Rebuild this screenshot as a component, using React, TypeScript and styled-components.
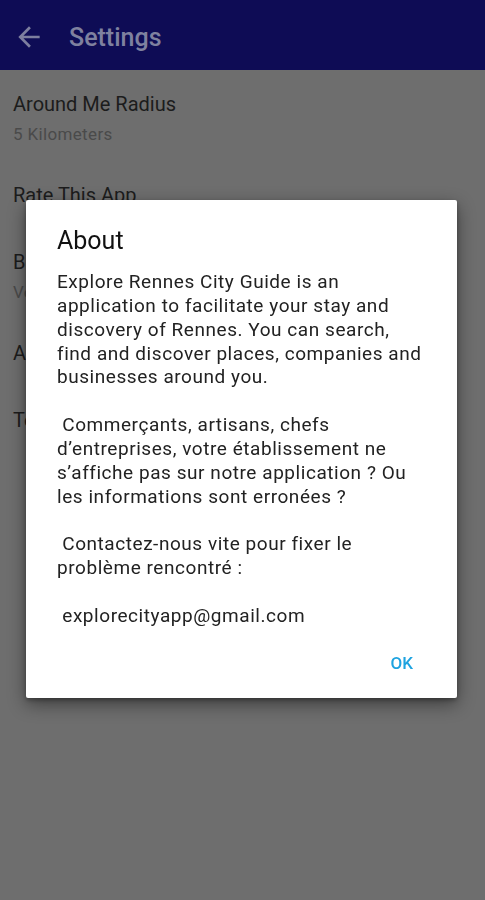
import React from "react";
import styled, { createGlobalStyle } from "styled-components";

const Global = createGlobalStyle`
  html, body { margin: 0; padding: 0; }
  body {
    background: #6e6e6e;
    font-family: Roboto, "Noto Sans", "Liberation Sans", sans-serif;
    -webkit-font-smoothing: antialiased;
  }
`;

const Page = styled.div`
  width: 485px;
  height: 900px;
  background: #6e6e6e;
  overflow: hidden;
  display: flex;
  flex-direction: column;
`;

const AppBar = styled.header`
  height: 70px;
  flex: 0 0 70px;
  background: #0e0c55;
  display: flex;
  align-items: center;
  padding: 4px 0 0 13px;
  gap: 24px;
  box-sizing: border-box;
`;

const BackIcon = styled.svg`
  width: 32px;
  height: 32px;
  fill: #7d7f9f;
  flex: 0 0 auto;
`;

const Title = styled.h1`
  margin: 0;
  font-size: 25px;
  font-weight: 500;
  color: #7f819f;
`;

const List = styled.div`
  display: flex;
  flex-direction: column;
`;

const Row = styled.div<{ $hasSub?: boolean }>`
  display: flex;
  flex-direction: column;
  padding: 22px 13px ${(p) => (p.$hasSub ? "16px" : "21px")};
`;

const RowTitle = styled.div`
  font-size: 20px;
  line-height: 24px;
  color: #1c1c1c;
`;

const RowSub = styled.div`
  margin-top: 7px;
  font-size: 17px;
  line-height: 22px;
  letter-spacing: 0.35px;
  color: #4a4a4a;
`;

const Scrim = styled.div`
  position: fixed;
  inset: 0;
  display: flex;
  justify-content: flex-start;
  align-items: flex-start;
  padding: 200px 0 0 26px;
`;

const Dialog = styled.div`
  width: 431px;
  height: 498px;
  box-sizing: border-box;
  background: #ffffff;
  border-radius: 2px;
  box-shadow: 0 6px 18px rgba(0, 0, 0, 0.45), 0 2px 4px rgba(0, 0, 0, 0.3);
  padding: 26px 10px 0 31px;
  display: flex;
  flex-direction: column;
`;

const DialogTitle = styled.h2`
  margin: 0;
  font-size: 25px;
  font-weight: 400;
  line-height: 30px;
  color: #111111;
`;

const DialogBody = styled.div`
  margin-top: 14px;
  font-size: 19px;
  line-height: 23.85px;
  letter-spacing: 0.55px;
  color: #222222;
  white-space: pre;
`;

const Actions = styled.div`
  display: flex;
  justify-content: flex-end;
  margin-top: 25px;
  padding-right: 34px;
`;

const OkButton = styled.button`
  border: none;
  background: transparent;
  font-family: Roboto, "Noto Sans", "Liberation Sans", sans-serif;
  font-size: 17px;
  font-weight: 500;
  color: #1ea3e0;
  padding: 0;
  cursor: pointer;
`;

const bodyText = `Explore Rennes City Guide is an
application to facilitate your stay and
discovery of Rennes. You can search,
find and discover places, companies and
businesses around you.

 Commerçants, artisans, chefs
d’entreprises, votre établissement ne
s’affiche pas sur notre application ? Ou
les informations sont erronées ?

 Contactez-nous vite pour fixer le
problème rencontré :

 explorecityapp@gmail.com`;

const settings = [
  { title: "Around Me Radius", sub: "5 Kilometers" },
  { title: "Rate This App" },
  { title: "Build Version", sub: "Version 1.0" },
  { title: "About" },
  { title: "Terms of Use" },
];

export default function App() {
  return (
    <>
      <Global />
      <Page>
        <AppBar>
          <BackIcon viewBox="0 0 24 24">
            <path d="M20 11H7.83l5.59-5.59L12 4l-8 8 8 8 1.41-1.41L7.83 13H20v-2z" />
          </BackIcon>
          <Title>Settings</Title>
        </AppBar>
        <List>
          {settings.map((s) => (
            <Row key={s.title} $hasSub={!!s.sub}>
              <RowTitle>{s.title}</RowTitle>
              {s.sub && <RowSub>{s.sub}</RowSub>}
            </Row>
          ))}
        </List>
      </Page>
      <Scrim>
        <Dialog>
          <DialogTitle>About</DialogTitle>
          <DialogBody>{bodyText}</DialogBody>
          <Actions>
            <OkButton>OK</OkButton>
          </Actions>
        </Dialog>
      </Scrim>
    </>
  );
}
